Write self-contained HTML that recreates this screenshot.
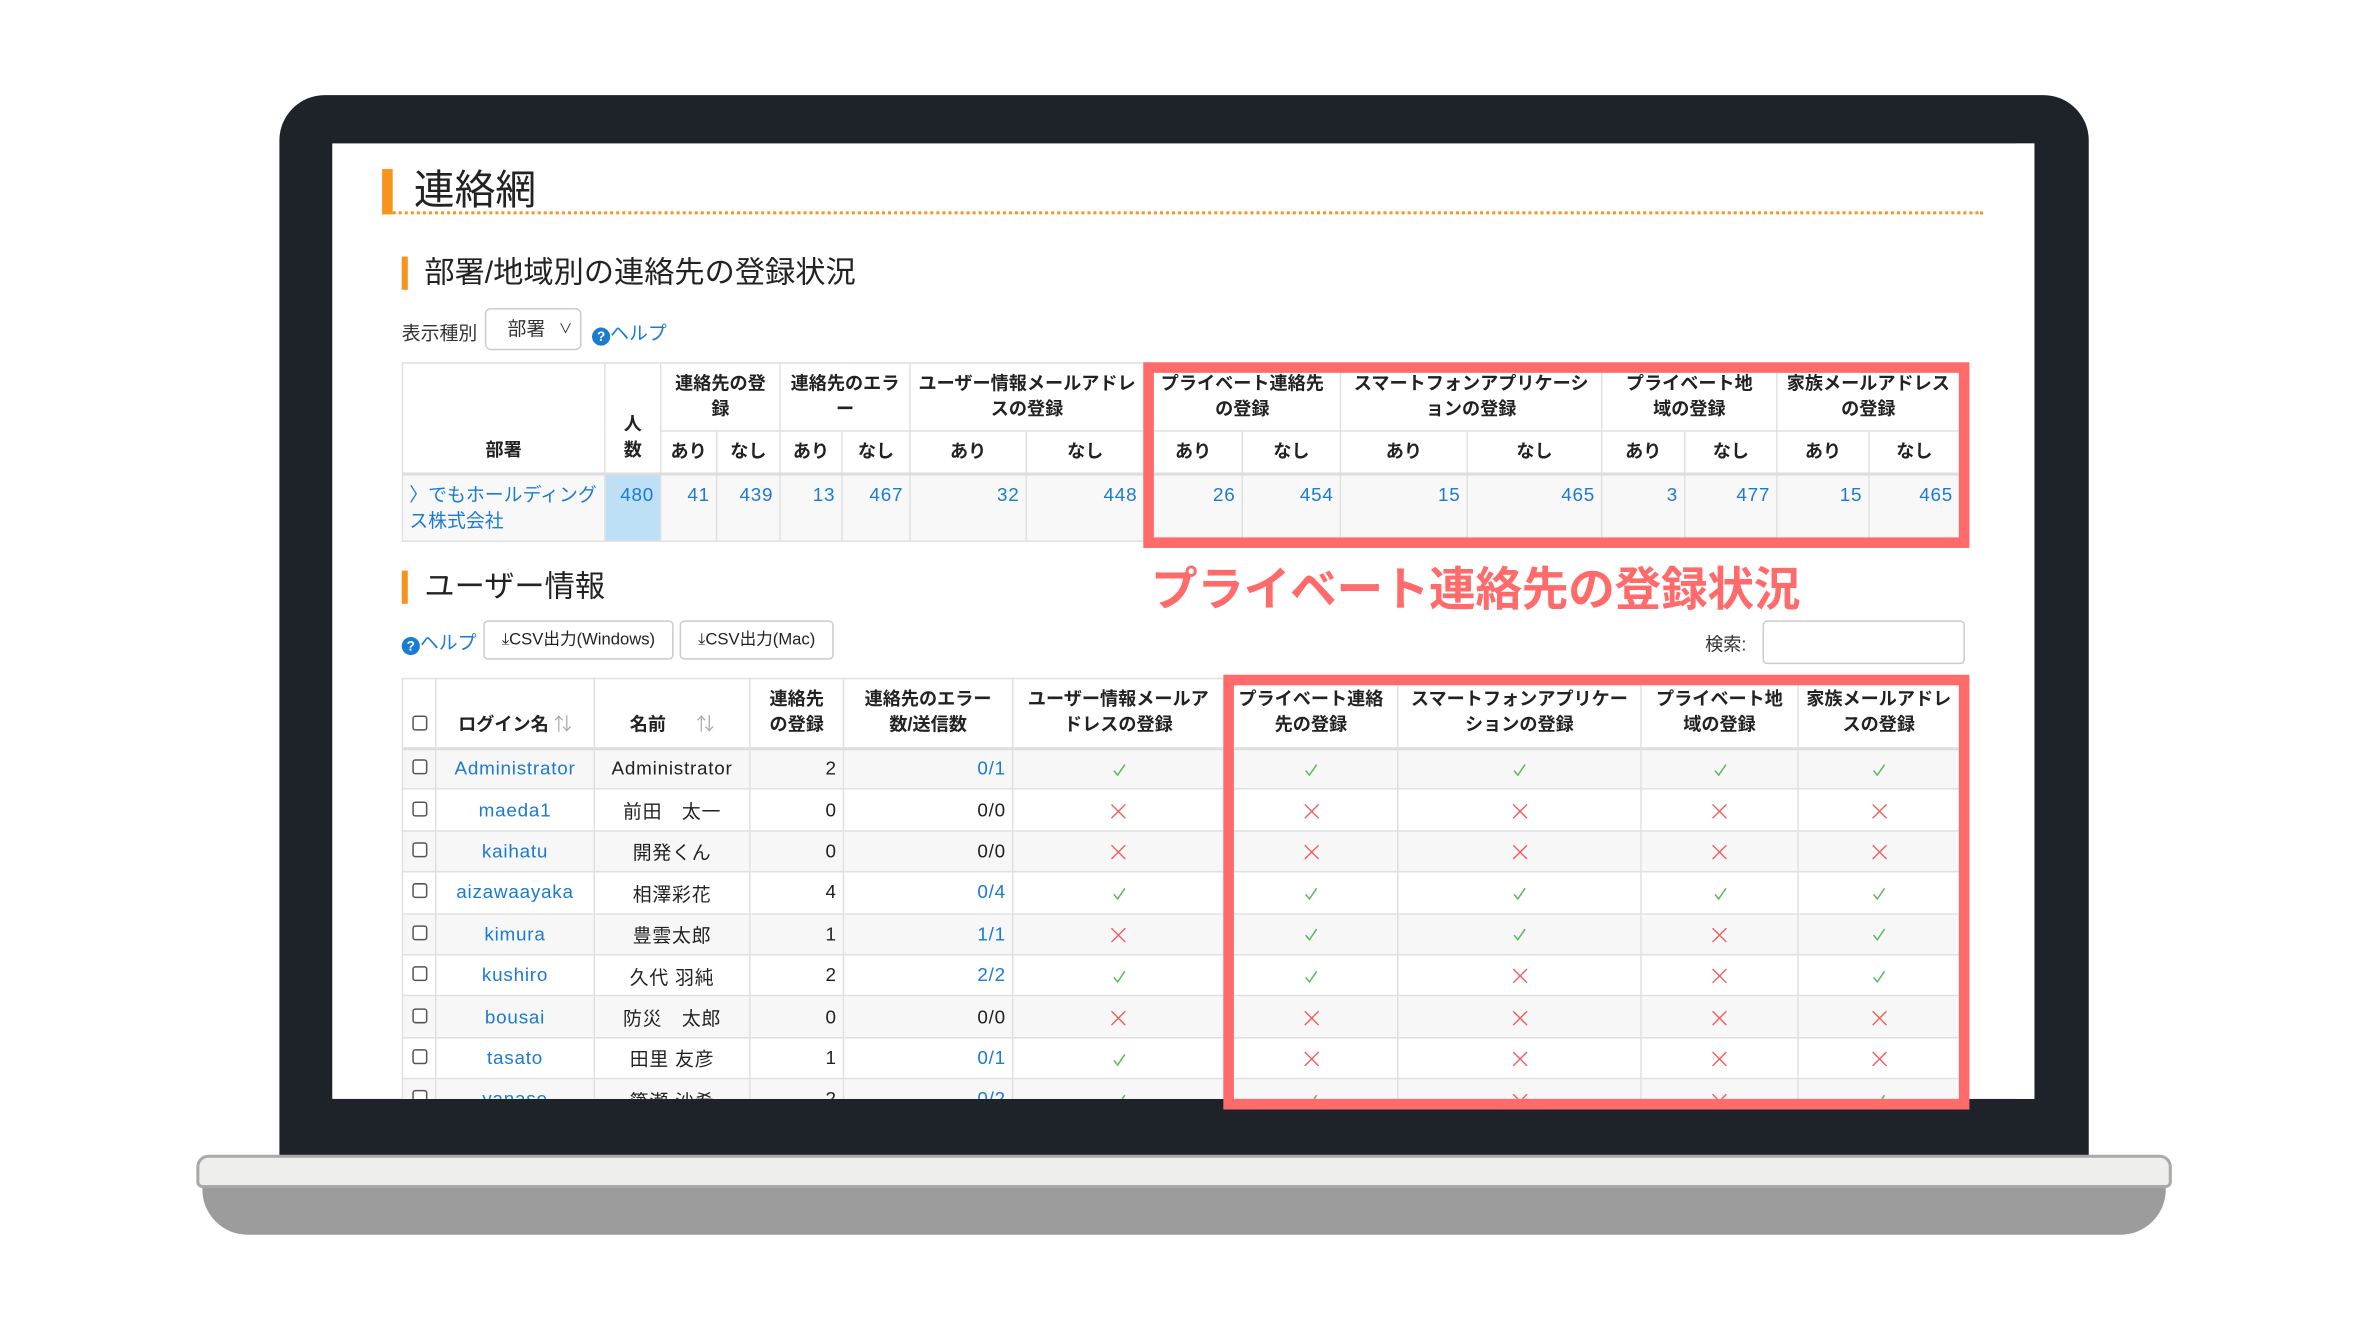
<!DOCTYPE html>
<html><head><meta charset="utf-8"><style>
*{box-sizing:border-box;margin:0;padding:0}
html,body{width:2368px;height:1332px;overflow:hidden;background:#fff}
#s{position:absolute;left:0;top:0;width:1560px;height:878px;transform:scale(1.5103,1.5095);transform-origin:0 0;font-family:"Liberation Sans","Noto Sans CJK JP",sans-serif;color:#222}
.abs{position:absolute}
.bezel{left:185px;top:63px;width:1198px;height:705px;background:#1e232a;border-radius:30px 30px 0 0}
.screen{left:220px;top:95px;width:1127px;height:633px;background:#fff;overflow:hidden}
.base1{left:130px;top:765px;width:1308px;height:22px;background:#eeeeec;border:2px solid #a9a9a9;border-radius:8px 8px 4px 4px}
.base2{left:134px;top:785px;width:1300px;height:33px;background:#9b9c9b;border-radius:0 0 30px 30px}
.blue{color:#1a7ad4}
table{border-collapse:collapse;table-layout:fixed;font-size:12px}
td,th{border:1px solid #e0e0e0;padding:0 4px;overflow:hidden;white-space:nowrap}
th{font-weight:bold;line-height:17px;white-space:normal;text-align:center}
.t1 td{background:#f8f8f8;text-align:right;color:#1a7ad4;vertical-align:top;padding-top:6px;font-size:12.5px;letter-spacing:.5px}
.t2 td{height:27.4px;text-align:center;font-size:12.5px;letter-spacing:.5px}
.t2 tr:nth-child(odd) td{background:#f7f7f7}
.r{text-align:right!important}
.cb{display:inline-block;width:10px;height:10px;border:1px solid #555;border-radius:2px;background:#fff}
.red{border:7px solid #ff6b6b}
.btn{border:1px solid #ccc;border-radius:3px;background:#fff;font-size:11px;text-align:center;line-height:24px}
svg{vertical-align:middle}
</style></head><body><div id="s">
<svg width="0" height="0" style="position:absolute"><defs>
<symbol id="ok" viewBox="0 0 10 10"><path d="M1.5 5.5L4 8.5L8.8 1.5" fill="none" stroke="#5cb85c" stroke-width="1"/></symbol>
<symbol id="ng" viewBox="0 0 12 12"><path d="M1 1L11 11M11 1L1 11" fill="none" stroke="#f25b5b" stroke-width="1"/></symbol>
</defs></svg>
<div class="abs bezel"></div>
<div class="abs" style="left:1335px;top:95px;width:12px;height:633px;background:#f1f1f1"></div>
<div class="abs screen">
 <div class="abs" style="left:33px;top:17px;width:7px;height:30px;background:#f7931e"></div>
 <div class="abs" style="left:54px;top:13px;font-size:27px;line-height:36px">連絡網</div>
 <div class="abs" style="left:33px;top:45px;width:1060px;border-top:2px dotted #f7931e"></div>
 <div class="abs" style="left:46px;top:75px;width:4px;height:22px;background:#f7931e"></div>
 <div class="abs" style="left:61px;top:72px;font-size:20px;line-height:28px">部署/地域別の連絡先の登録状況</div>
 <div class="abs" style="left:46px;top:115px;font-size:12.5px;color:#333">表示種別</div>
 <div class="abs" style="left:101px;top:109px;width:64px;height:28px;border:1px solid #ccc;border-radius:4px;font-size:12.5px;line-height:26px;padding-left:14px;color:#333">部署<span style="position:absolute;right:5px;font-size:9px">∨</span></div>
 <div class="abs blue" style="left:172px;top:115px;font-size:12.5px"><span style="display:inline-block;width:12px;height:12px;border-radius:6px;background:#1a7ad4;color:#fff;font-size:9px;text-align:center;line-height:12px;font-weight:bold;vertical-align:-1px">?</span>ヘルプ</div>
 <table class="abs t1" style="left:46px;top:145px;width:1031px">
  <colgroup><col style="width:134px"><col style="width:37px"><col style="width:37px"><col style="width:42px"><col style="width:41px"><col style="width:45px"><col style="width:77px"><col style="width:78px"><col style="width:65px"><col style="width:65px"><col style="width:84px"><col style="width:89px"><col style="width:55px"><col style="width:61px"><col style="width:61px"><col style="width:60px"></colgroup>
  <tr style="height:45px"><th rowspan="2" style="vertical-align:bottom;padding-bottom:6px">部署</th><th rowspan="2" style="vertical-align:bottom;padding:0 8px 6px">人数</th><th colspan="2">連絡先の登録</th><th colspan="2">連絡先のエラー</th><th colspan="2">ユーザー情報メールアドレスの登録</th><th colspan="2" style="padding:0 10px">プライベート連絡先の登録</th><th colspan="2">スマートフォンアプリケーションの登録</th><th colspan="2" style="padding:0 10px">プライベート地域の登録</th><th colspan="2">家族メールアドレスの登録</th></tr>
  <tr style="height:28px;border-bottom:2px solid #ddd"><th>あり</th><th>なし</th><th>あり</th><th>なし</th><th>あり</th><th>なし</th><th>あり</th><th>なし</th><th>あり</th><th>なし</th><th>あり</th><th>なし</th><th>あり</th><th>なし</th></tr>
  <tr style="height:45px"><td style="text-align:left;white-space:normal;line-height:17px;padding-top:5px;letter-spacing:0">〉でもホールディングス株式会社</td><td style="background:#bde0f7">480</td><td>41</td><td>439</td><td>13</td><td>467</td><td>32</td><td>448</td><td>26</td><td>454</td><td>15</td><td>465</td><td>3</td><td>477</td><td>15</td><td>465</td></tr>
 </table>
 <div class="abs" style="left:46px;top:283px;width:4px;height:22px;background:#f7931e"></div>
 <div class="abs" style="left:61px;top:280px;font-size:20px;line-height:28px">ユーザー情報</div>
 <div class="abs blue" style="left:46px;top:320px;font-size:12.5px"><span style="display:inline-block;width:12px;height:12px;border-radius:6px;background:#1a7ad4;color:#fff;font-size:9px;text-align:center;line-height:12px;font-weight:bold;vertical-align:-1px">?</span>ヘルプ</div>
 <div class="abs btn" style="left:100px;top:316px;width:126px;height:26px">⤓CSV出力(Windows)</div>
 <div class="abs btn" style="left:230px;top:316px;width:102px;height:26px">⤓CSV出力(Mac)</div>
 <div class="abs" style="left:909px;top:323px;font-size:12px;color:#333">検索:</div>
 <div class="abs" style="left:947px;top:316px;width:134px;height:29px;border:1px solid #ccc;border-radius:3px"></div>
 <table class="abs t2" style="left:46px;top:354px;width:1031px">
  <colgroup><col style="width:22px"><col style="width:105px"><col style="width:103px"><col style="width:62px"><col style="width:112px"><col style="width:140px"><col style="width:115px"><col style="width:161px"><col style="width:104px"><col style="width:107px"></colgroup>
  <thead><tr style="height:46px;border-bottom:2px solid #ddd"><th style="padding:0"><span class="cb" style="margin-top:18px"></span></th><th style="vertical-align:bottom;padding-bottom:6px">ログイン名 <span style="color:#aaa;font-weight:normal">⇅</span></th><th style="vertical-align:bottom;padding-bottom:6px">名前 &nbsp;&nbsp;&nbsp;&nbsp;&nbsp;<span style="color:#aaa;font-weight:normal">⇅</span></th><th style="padding:0 8px">連絡先の登録</th><th style="padding:0 8px">連絡先のエラー数/送信数</th><th>ユーザー情報メールアドレスの登録</th><th>プライベート連絡先の登録</th><th>スマートフォンアプリケーションの登録</th><th>プライベート地域の登録</th><th>家族メールアドレスの登録</th></tr></thead>
  <tbody id="tb">
  <tr><td style="padding:0"><span class="cb"></span></td><td class="blue" style="padding:0">Administrator</td><td style="padding:0">Administrator</td><td class="r">2</td><td class="r blue">0/1</td><td>Y</td><td>Y</td><td>Y</td><td>Y</td><td>Y</td></tr>
  <tr><td style="padding:0"><span class="cb"></span></td><td class="blue">maeda1</td><td>前田　太一</td><td class="r">0</td><td class="r">0/0</td><td>N</td><td>N</td><td>N</td><td>N</td><td>N</td></tr>
  <tr><td style="padding:0"><span class="cb"></span></td><td class="blue">kaihatu</td><td>開発くん</td><td class="r">0</td><td class="r">0/0</td><td>N</td><td>N</td><td>N</td><td>N</td><td>N</td></tr>
  <tr><td style="padding:0"><span class="cb"></span></td><td class="blue">aizawaayaka</td><td>相澤彩花</td><td class="r">4</td><td class="r blue">0/4</td><td>Y</td><td>Y</td><td>Y</td><td>Y</td><td>Y</td></tr>
  <tr><td style="padding:0"><span class="cb"></span></td><td class="blue">kimura</td><td>豊雲太郎</td><td class="r">1</td><td class="r blue">1/1</td><td>N</td><td>Y</td><td>Y</td><td>N</td><td>Y</td></tr>
  <tr><td style="padding:0"><span class="cb"></span></td><td class="blue">kushiro</td><td>久代 羽純</td><td class="r">2</td><td class="r blue">2/2</td><td>Y</td><td>Y</td><td>N</td><td>N</td><td>Y</td></tr>
  <tr><td style="padding:0"><span class="cb"></span></td><td class="blue">bousai</td><td>防災　太郎</td><td class="r">0</td><td class="r">0/0</td><td>N</td><td>N</td><td>N</td><td>N</td><td>N</td></tr>
  <tr><td style="padding:0"><span class="cb"></span></td><td class="blue">tasato</td><td>田里 友彦</td><td class="r">1</td><td class="r blue">0/1</td><td>Y</td><td>N</td><td>N</td><td>N</td><td>N</td></tr>
  <tr><td style="padding:0"><span class="cb"></span></td><td class="blue">yanase</td><td>簗瀬 沙希</td><td class="r">2</td><td class="r blue">0/2</td><td>Y</td><td>Y</td><td>N</td><td>N</td><td>Y</td></tr>
  </tbody>
 </table>
</div>
<div class="abs red" style="left:757px;top:240px;width:547px;height:123px"></div>
<div class="abs red" style="left:810px;top:447px;width:494px;height:288px"></div>
<div class="abs" style="left:762px;top:371px;font-size:31px;font-weight:bold;color:#ff6b6b;line-height:40px;letter-spacing:-0.3px">プライベート連絡先の登録状況</div>
<div class="abs base2"></div>
<div class="abs base1"></div>
</div>
<script>
document.querySelectorAll('#tb td').forEach(function(td){
 var t=td.textContent.trim();
 if(t==='Y')td.innerHTML='<svg width="10" height="10"><use href="#ok"/></svg>';
 else if(t==='N')td.innerHTML='<svg width="11" height="11"><use href="#ng"/></svg>';
});
</script>
</body></html>
